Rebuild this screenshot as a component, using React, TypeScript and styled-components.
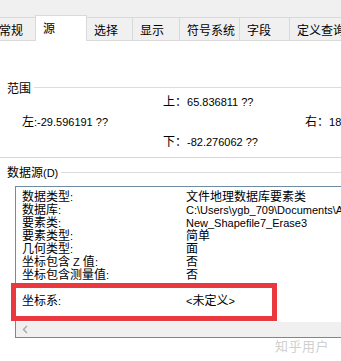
import styled, { createGlobalStyle } from 'styled-components';

const GlobalStyle = createGlobalStyle`
  body {
    margin: 0;
    background: #ffffff;
    overflow: hidden;
    font-family: 'Noto Sans CJK SC', 'Liberation Sans', sans-serif;
    font-size: 12px;
    color: #000;
  }
`;

const Page = styled.div`
  position: relative;
  width: 341px;
  height: 361px;
  overflow: hidden;
`;

const TabBar = styled.div`
  display: flex;
  align-items: flex-end;
  height: 41px;
  box-sizing: border-box;
  background: #f0f0f0;
  border-bottom: 1px solid #d9d9d9;
  margin-left: -8px;
`;

const Tab = styled.div<{ $w: number; $active?: boolean }>`
  display: flex;
  align-items: center;
  box-sizing: border-box;
  flex: none;
  width: ${(p) => p.$w}px;
  height: ${(p) => (p.$active ? 26 : 23)}px;
  padding: ${(p) => (p.$active ? '0 0 2px 7px' : '1px 0 0 7px')};
  margin-left: -1px;
  margin-bottom: ${(p) => (p.$active ? -1 : 0)}px;
  background: ${(p) => (p.$active ? '#ffffff' : '#f0f0f0')};
  border: 1px solid #d9d9d9;
  border-bottom: 0;
  position: relative;
  z-index: ${(p) => (p.$active ? 1 : 0)};
  line-height: 13px;
  white-space: nowrap;
`;

// Latin runs are set smaller and narrower than the CJK glyphs, like the Windows UI font
const Lat = styled.span`
  font-family: 'Liberation Sans', sans-serif;
  font-size: 11px;
`;

const GroupHeader = styled.div<{ $top: number }>`
  display: flex;
  align-items: center;
  gap: 3px;
  height: 13px;
  line-height: 13px;
  margin-top: ${(p) => p.$top}px;
  padding-left: 7px;
`;

const GroupLine = styled.div`
  flex: 1;
  height: 1px;
  background: #dcdcdc;
`;

const ExtentGrid = styled.div`
  display: grid;
  grid-template-columns: 141px 142px 1fr;
  grid-template-rows: 13px 13px 13px;
  row-gap: 7px;
  padding-left: 22px;
  line-height: 13px;
  white-space: nowrap;
`;

const Cell = styled.div<{ $col: number; $row: number }>`
  grid-column: ${(p) => p.$col};
  grid-row: ${(p) => p.$row};
`;

const Separator = styled.div`
  height: 1px;
  background: #d7d7d7;
  margin-top: 10px;
`;

const ListBox = styled.div`
  margin: 7px -30px 0 15px;
  height: 152px;
  box-sizing: border-box;
  border: 1px solid #6f8ca2;
  display: flex;
  flex-direction: column;
`;

const Rows = styled.div`
  flex: 1;
  padding: 2px 0 0 6px;
`;

const Row = styled.div`
  display: grid;
  grid-template-columns: 164px 1fr;
  height: 13px;
  line-height: 13px;
  white-space: nowrap;
`;

const ScrollBar = styled.div`
  height: 15px;
  background: #f0f0f0;
  display: flex;
  align-items: center;
  padding-left: 6px;
`;

const Highlight = styled.div`
  position: absolute;
  left: 11px;
  top: 283px;
  width: 266px;
  height: 38px;
  box-sizing: border-box;
  border: 5px solid #e9383e;
`;

const Watermark = styled.div`
  position: absolute;
  left: 275px;
  top: 338px;
  font-size: 13px;
  line-height: 15px;
  color: #cfcfcf;
  letter-spacing: 0.5px;
`;

function Mixed({ text }: { text: string }) {
  const parts = text.split(/([\x20-\x7e]+)/).filter(Boolean);
  return (
    <>
      {parts.map((p, i) =>
        /^[\x20-\x7e]+$/.test(p) ? <Lat key={i}>{p}</Lat> : <span key={i}>{p}</span>
      )}
    </>
  );
}

const tabs = [
  { label: '常规', w: 45 },
  { label: '源', w: 52, active: true },
  { label: '选择', w: 47 },
  { label: '显示', w: 48 },
  { label: '符号系统', w: 61 },
  { label: '字段', w: 51 },
  { label: '定义查询', w: 70 },
];

const props: [string, string][] = [
  ['数据类型:', '文件地理数据库要素类'],
  ['数据库:', 'C:\\Users\\ygb_709\\Documents\\ArcGIS\\Default.gdb'],
  ['要素类:', 'New_Shapefile7_Erase3'],
  ['要素类型:', '简单'],
  ['几何类型:', '面'],
  ['坐标包含 Z 值:', '否'],
  ['坐标包含测量值:', '否'],
  ['', ''],
  ['坐标系:', '<未定义>'],
];

export default function App() {
  return (
    <Page>
      <GlobalStyle />
      <TabBar>
        {tabs.map((t) => (
          <Tab key={t.label} $w={t.w} $active={t.active}>
            {t.label}
          </Tab>
        ))}
      </TabBar>

      <GroupHeader $top={40}>
        范围
        <GroupLine />
      </GroupHeader>
      <ExtentGrid>
        <Cell $col={2} $row={1}><Mixed text="上：65.836811 ??" /></Cell>
        <Cell $col={1} $row={2}><Mixed text="左:-29.596191 ??" /></Cell>
        <Cell $col={3} $row={2}><Mixed text="右：185.000000 ??" /></Cell>
        <Cell $col={2} $row={3}><Mixed text="下：-82.276062 ??" /></Cell>
      </ExtentGrid>
      <Separator />

      <GroupHeader $top={8}>
        <span><Mixed text="数据源(D)" /></span>
        <GroupLine />
      </GroupHeader>
      <ListBox>
        <Rows>
          {props.map(([k, v], i) => (
            <Row key={i}>
              <span><Mixed text={k} /></span>
              <span><Mixed text={v} /></span>
            </Row>
          ))}
        </Rows>
        <ScrollBar>
          <svg width="6" height="9" viewBox="0 0 6 9">
            <path d="M5 1 L1.5 4.5 L5 8" fill="none" stroke="#a6a6a6" strokeWidth="1.4" />
          </svg>
        </ScrollBar>
      </ListBox>

      <Highlight />
      <Watermark>知乎用户</Watermark>
    </Page>
  );
}
